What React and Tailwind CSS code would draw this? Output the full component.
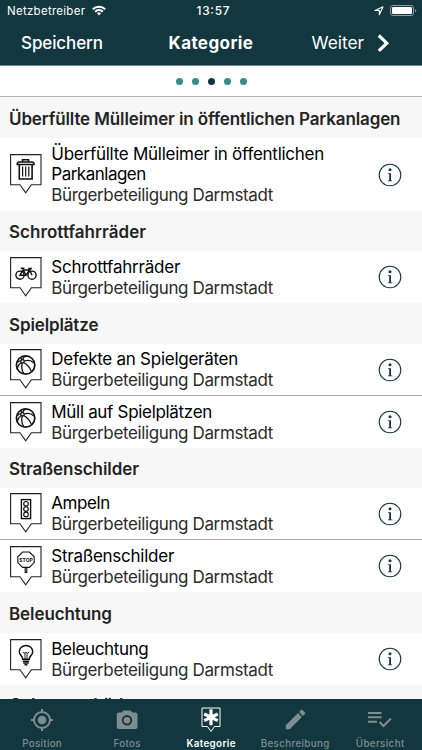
import React from 'react';

const INK = '#111';

function Fit({ w, children, size, x = 0, anchor = 'start', weight, fill = 'currentColor', y }) {
  return (
    <text x={x} y={y} fontSize={size} fontWeight={weight} fill={fill} textLength={w} textAnchor={anchor}>
      {children}
    </text>
  );
}

const glyphs = {
  trash: (
    <g fill="none" stroke={INK} strokeWidth="1.6">
      <path d="M7.3 10.5V9.2a1.8 1.8 0 0 1 1.8-1.2h13a1.8 1.8 0 0 1 1.8 1.2v1.3zM12.5 7.6V5.8h6v1.8" />
      <path d="M9.3 11v14h12.8V11" />
      <path d="M12.6 12.5v10M15.7 12.5v10M18.8 12.5v10" strokeWidth="1.2" />
    </g>
  ),
  bike: (
    <g fill="none" stroke={INK} strokeWidth="1.4">
      <circle cx="10" cy="18.2" r="4.1" />
      <circle cx="22" cy="18.2" r="4.1" />
      <path d="M10 18.2l3-5.2h6.6l-3.6 5.2zM12.6 11.5l3.4 6.7M10.8 11.3h3.6M22 18.2l-3-6.7h3" />
    </g>
  ),
  ball: (
    <g fill="none" stroke={INK} strokeWidth="1.3">
      <circle cx="15.6" cy="16" r="9.2" strokeWidth="1.7" />
      <circle cx="12.5" cy="12.3" r="1.7" />
      <path d="M10.8 12c-1.5-.2-2.5.4-3.3 1.7M12.7 10.6c.3-1.9 1.6-3 3.6-3.6M14.2 12c3.8-1.3 7.2-.6 9.7 2M13.7 13.5c3.6 2 6.3 5 7.7 8.9M12.3 14c-1.1 3.7-.6 7.3 1.4 10.7M11.2 13.5c-2.1 1.4-3.5 3.3-4 6M11.7 10.8c-.5-.8-.6-1.5-.4-2.5" />
    </g>
  ),
  light: (
    <g fill="none" stroke={INK} strokeWidth="1.4">
      <rect x="11.4" y="6.6" width="9.2" height="19" />
      <circle cx="16" cy="10.8" r="2.3" strokeWidth="1.1" />
      <circle cx="16" cy="16.1" r="2.3" strokeWidth="1.1" />
      <circle cx="16" cy="21.4" r="2.3" strokeWidth="1.1" />
    </g>
  ),
  stop: (
    <g fill="none" stroke={INK} strokeWidth="1.1">
      <path d="M12.6 6h6.8l4.8 4.8v5.8l-4.8 4.8h-6.8l-4.8-4.8v-5.8zM15.2 21.4v5h1.6v-5" />
      <text x="16" y="15.6" textAnchor="middle" fontSize="5" fontWeight="700" fill={INK} stroke="none" textLength="13.4">STOP</text>
    </g>
  ),
  bulb: (
    <g fill="none" stroke={INK} strokeWidth="1.5">
      <path d="M12.8 20.2c0-3-3.5-4-3.5-7.5a6.7 6.2 0 0 1 13.4 0c0 3.5-3.5 4.5-3.5 7.5z" />
      <path d="M12.8 13l2.2 1.5 1-1.5 1 1.5 2.2-1.5M15 14.5v5.5M17 14.5v5.5" strokeWidth=".9" />
      <path d="M12.8 22.2h6.4M13.2 24h5.6M14.5 25.7h3" />
    </g>
  ),
};

function Pin({ name }) {
  return (
    <svg width="32" height="41" viewBox="0 0 32 41" className="shrink-0">
      <path d="M.6.6h30.4v30.2h-9.6l-5.7 8-5.7-8H.6z" fill="#fff" stroke="#222" strokeWidth="1.1" />
      {glyphs[name]}
    </svg>
  );
}

function Info() {
  return (
    <svg width="24" height="24" viewBox="0 0 24 24" className="shrink-0">
      <circle cx="12" cy="12" r="10.8" fill="none" stroke="#12373f" strokeWidth="1.1" />
      <circle cx="12" cy="6.8" r="1.5" fill="#12373f" />
      <path d="M9.9 10.2h3.1v7.2h1.2v.8H9.9v-.8h1.3V11H9.9z" fill="#12373f" />
    </svg>
  );
}

function Heading({ children, w, h }) {
  return (
    <h2 className={`${h} flex w-full shrink-0 items-center bg-[#f7f7f7] pl-[9px] text-[#242424]`}>
      <svg width="410" height="28" className="shrink-0">
        <Fit y="20.5" size="17" weight="600" w={w}>{children}</Fit>
      </svg>
    </h2>
  );
}

function Row({ icon, lines, h, line }) {
  const count = lines.length;
  const top = line ? 18.2 : 17.7;
  return (
    <div className={`${h} flex shrink-0 items-center bg-white pl-[10px] pr-5 ${line ? 'border-b border-[#a9a9a9]' : ''}`}>
      <Pin name={icon} />
      <svg width="300" height={count * 20.5 + 24} className="ml-[9px] shrink-0 text-black">
        {lines.map(([t, w], i) => (
          <Fit key={t} x={0.3} y={top + i * 20.5} size="17" w={w}>{t}</Fit>
        ))}
        <Fit x={0.3} y={18.2 + count * 20.5} size="17" w={222} fill="#2b2b2b">Bürgerbeteiligung Darmstadt</Fit>
      </svg>
      <div className="ml-auto flex"><Info /></div>
    </div>
  );
}

function Tab({ label, w, active, children }) {
  return (
    <div className={`flex flex-1 flex-col items-center ${active ? 'text-white' : 'text-[#7f8d91]'}`}>
      <svg width="28" height="34" viewBox="0 0 28 34" className="mt-[3px]">{children}</svg>
      <svg width="80" height="14">
        <Fit x="40" anchor="middle" y="10.5" size="9.8" weight={active ? 600 : 500} w={w}>{label}</Fit>
      </svg>
    </div>
  );
}

export default function App() {
  return (
    <div className="flex h-[750px] w-[422px] flex-col overflow-hidden bg-[#f7f7f7] font-['Inter',sans-serif]">
      <header className="h-[66px] shrink-0 border-b border-[#71898e] bg-[#12373f] text-white">
        <svg width="422" height="65" className="block">
          <Fit x="7" y="15" size="11.5" w={78}>Netzbetreiber</Fit>
          <g fill="none" stroke="#fff" strokeWidth="2">
            <path d="M92.8 9.2a8.8 8.8 0 0 1 12.4 0M95.2 11.7a5.3 5.3 0 0 1 7.6 0" />
          </g>
          <path d="M96.9 13.3a3 3 0 0 1 4.2 0L99 15.5z" fill="#fff" />
          <Fit x="213" anchor="middle" y="15" size="11.8" weight="500" w={33}>13:57</Fit>
          <path d="M375 10.5l8-3.7-3.7 8v-4.3z" fill="none" stroke="#fff" strokeWidth="1.1" strokeLinejoin="round" />
          <rect x="390.5" y="5.5" width="23" height="10" rx="2.5" fill="none" stroke="#8b9da1" />
          <rect x="392" y="7" width="20" height="7" rx="1.2" fill="#fff" />
          <path d="M415 9v3.2q1.2-.5 1.2-1.6T415 9" fill="#8b9da1" />
          <Fit x="21" y="49" size="17" weight="500" w={82}>Speichern</Fit>
          <Fit x="168.5" y="49" size="17" weight="700" w={84.5}>Kategorie</Fit>
          <Fit x="311.5" y="49" size="17.3" w={52.5}>Weiter</Fit>
          <path d="M378.8 35.5l8 7.7-8 7.7" fill="none" stroke="#fff" strokeWidth="3.2" />
        </svg>
      </header>
      <div className="flex h-[31px] shrink-0 items-center justify-center gap-[9px] border-b border-[#b5b5b5] bg-white">
        {[0, 1, 2, 3, 4].map((i) => (
          <span key={i} className={`size-[7px] rounded-full ${i === 2 ? 'bg-[#12373f]' : 'bg-[#3a8c89]'}`} />
        ))}
      </div>
      <main className="flex h-[602px] shrink-0 flex-col overflow-hidden">
        <Heading h="h-[41px]" w={391.5}>Überfüllte Mülleimer in öffentlichen Parkanlagen</Heading>
        <Row h="h-[73px]" icon="trash" lines={[['Überfüllte Mülleimer in öffentlichen', 273], ['Parkanlagen', 95]]} />
        <Heading h="h-[40px]" w={137}>Schrottfahrräder</Heading>
        <Row h="h-[52px]" icon="bike" lines={[['Schrottfahrräder', 129]]} />
        <Heading h="h-[41px]" w={89.5}>Spielplätze</Heading>
        <Row h="h-[52px]" icon="ball" lines={[['Defekte an Spielgeräten', 187]]} line />
        <Row h="h-[52px]" icon="ball" lines={[['Müll auf Spielplätzen', 161]]} />
        <Heading h="h-[40px]" w={130}>Straßenschilder</Heading>
        <Row h="h-[52px]" icon="light" lines={[['Ampeln', 59]]} line />
        <Row h="h-[52px]" icon="stop" lines={[['Straßenschilder', 123]]} />
        <Heading h="h-[41px]" w={103}>Beleuchtung</Heading>
        <Row h="h-[52px]" icon="bulb" lines={[['Beleuchtung', 97.5]]} />
        <Heading h="h-[38px]" w={134}>Gehwegschäden</Heading>
      </main>
      <nav className="flex h-[51px] shrink-0 bg-[#12373f]">
        <Tab label="Position" w={39.5}>
          <g fill="none" stroke="currentColor" strokeWidth="2">
            <circle cx="14" cy="18" r="8" />
            <path d="M14 7v3M14 26v3M3 18h3M22 18h3" />
          </g>
          <circle cx="14" cy="18" r="4.3" fill="currentColor" />
        </Tab>
        <Tab label="Fotos" w={27}>
          <path fillRule="evenodd" fill="currentColor" d="M10.5 8.5h7l2 2H22.5a2 2 0 0 1 2 2v12.5a2 2 0 0 1-2 2H5.8a2 2 0 0 1-2-2V12.5a2 2 0 0 1 2-2h2.7zM14 13a5.2 5.2 0 1 0 0 10.4A5.2 5.2 0 0 0 14 13" />
          <circle cx="14" cy="18.2" r="3.3" fill="currentColor" />
        </Tab>
        <Tab label="Kategorie" w={49} active>
          <path d="M5 6h18v18.5h-5.5L14 29.5l-3.5-5H5z" fill="none" stroke="currentColor" />
          <path d="M14 7.3v16M7.2 12l13.6 6.6M20.8 12L7.2 18.6" fill="none" stroke="currentColor" strokeWidth="3.2" />
        </Tab>
        <Tab label="Beschreibung" w={68.5}>
          <path d="M4.8 23.3L17 11.1l3.9 3.9L8.7 27.2H4.8zM18.1 10l1.9-1.9a1 1 0 0 1 1.5 0l2.4 2.4a1 1 0 0 1 0 1.5L22 13.9z" fill="currentColor" />
        </Tab>
        <Tab label="Übersicht" w={48.5}>
          <path d="M2 11h13.5M2 15.3h13.5M2 19.7h9M13.5 20l4 4 7.5-7.5" fill="none" stroke="currentColor" strokeWidth="2" />
        </Tab>
      </nav>
    </div>
  );
}
